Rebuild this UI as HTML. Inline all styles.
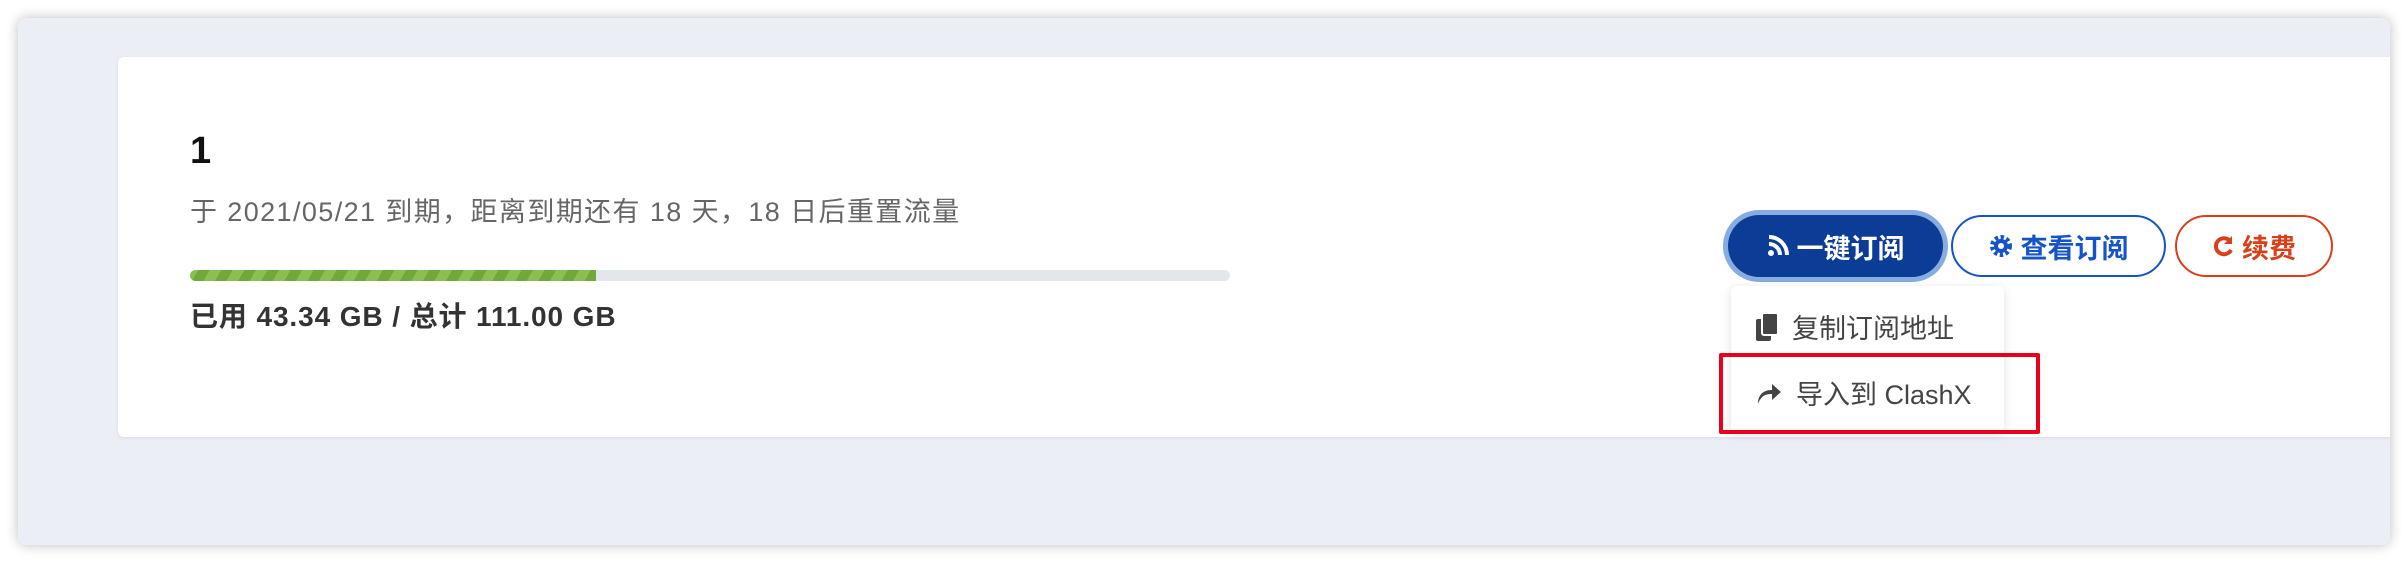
<!DOCTYPE html>
<html><head><meta charset="utf-8"><style>
*{margin:0;padding:0;box-sizing:border-box}
body{width:2408px;height:564px;background:#fff;position:relative;overflow:hidden;font-family:"Liberation Sans","Noto Sans CJK SC",sans-serif}
.panel{position:absolute;left:18px;top:18px;width:2372px;height:527px;background:#ebeef5;border-radius:8px;box-shadow:0 0 12px rgba(0,0,0,.25);overflow:hidden}
.card{position:absolute;left:100px;top:39px;width:2300px;height:380px;background:#fff;border-radius:6px;box-shadow:0 1px 3px rgba(0,0,0,.08)}
.t{position:absolute;left:190px;top:130px;font-size:38px;font-weight:bold;color:#111}
.s{position:absolute;left:190px;top:190px;font-size:27px;color:#666;letter-spacing:1.4px}
.bar{position:absolute;left:190px;top:270px;width:1040px;height:11px;background:#e3e6eb;border-radius:6px;overflow:hidden}
.bar div{width:406px;height:100%;background:repeating-linear-gradient(-60deg,#72a83a 0 10px,#8bbf55 10px 20px)}
.u{position:absolute;left:190px;top:295px;font-size:28px;font-weight:bold;color:#333;letter-spacing:0.9px}
.btn{position:absolute;top:215px;height:62px;border-radius:31px;font-size:27px;font-weight:bold;display:flex;align-items:center;justify-content:center;gap:8px}
.b1{left:1728px;width:215px;background:#0b3c96;color:#fff;box-shadow:0 0 0 5px #86ace0}
.b2{left:1951px;width:215px;border:2px solid #1554c8;color:#1554c8;background:#fff}
.b3{left:2175px;width:158px;border:2px solid #d9401a;color:#d9401a;background:#fff}
.dd{position:absolute;left:1731px;top:286px;width:273px;height:146px;background:#fff;border-radius:6px;box-shadow:0 2px 10px rgba(0,0,0,.12)}
.it{position:absolute;left:1756px;font-size:27px;color:#444;display:flex;align-items:center;gap:14px}
.red{position:absolute;left:1719px;top:353px;width:321px;height:81px;border:4px solid #e8001c;border-radius:2px}
</style></head><body>
<div class="panel"><div class="card"></div></div>
<div class="t">1</div>
<div class="s">于 2021/05/21 到期，距离到期还有 18 天，18 日后重置流量</div>
<div class="bar"><div></div></div>
<div class="u">已用 43.34 GB / 总计 111.00 GB</div>
<div class="btn b1"><svg width="22" height="22" viewBox="0 0 22 22"><circle cx="4" cy="18" r="3" fill="#fff"/><path d="M2 9a11 11 0 0 1 11 11M2 2a18 18 0 0 1 18 18" stroke="#fff" stroke-width="4" fill="none"/></svg>一键订阅</div>
<div class="btn b2"><svg width="24" height="24" viewBox="0 0 24 24"><circle cx="12" cy="12" r="8" fill="none" stroke="#1554c8" stroke-width="6" stroke-dasharray="3 2.3"/><circle cx="12" cy="12" r="7" fill="#1554c8"/><circle cx="12" cy="12" r="3" fill="#fff"/></svg>查看订阅</div>
<div class="btn b3"><svg width="22" height="24" viewBox="0 0 22 24"><path d="M18 7A8 8 0 1 0 19 16" stroke="#d9401a" stroke-width="4" fill="none"/><path d="M20 2v8h-8z" fill="#d9401a"/></svg>续费</div>
<div class="dd"></div>
<div class="it" style="top:307px"><svg width="22" height="28" viewBox="0 0 22 28"><rect x="0" y="6" width="15" height="22" rx="2" fill="#444"/><rect x="6" y="0" width="16" height="22" rx="2" fill="#444" stroke="#fff" stroke-width="2"/></svg>复制订阅地址</div>
<div class="it" style="top:373px"><svg width="26" height="22" viewBox="0 0 26 22"><path d="M2 22C2 12 8 8 16 8V2l9 8-9 8v-6C9 12 5 14 2 22z" fill="#444"/></svg>导入到 ClashX</div>
<div class="red"></div>
</body></html>
